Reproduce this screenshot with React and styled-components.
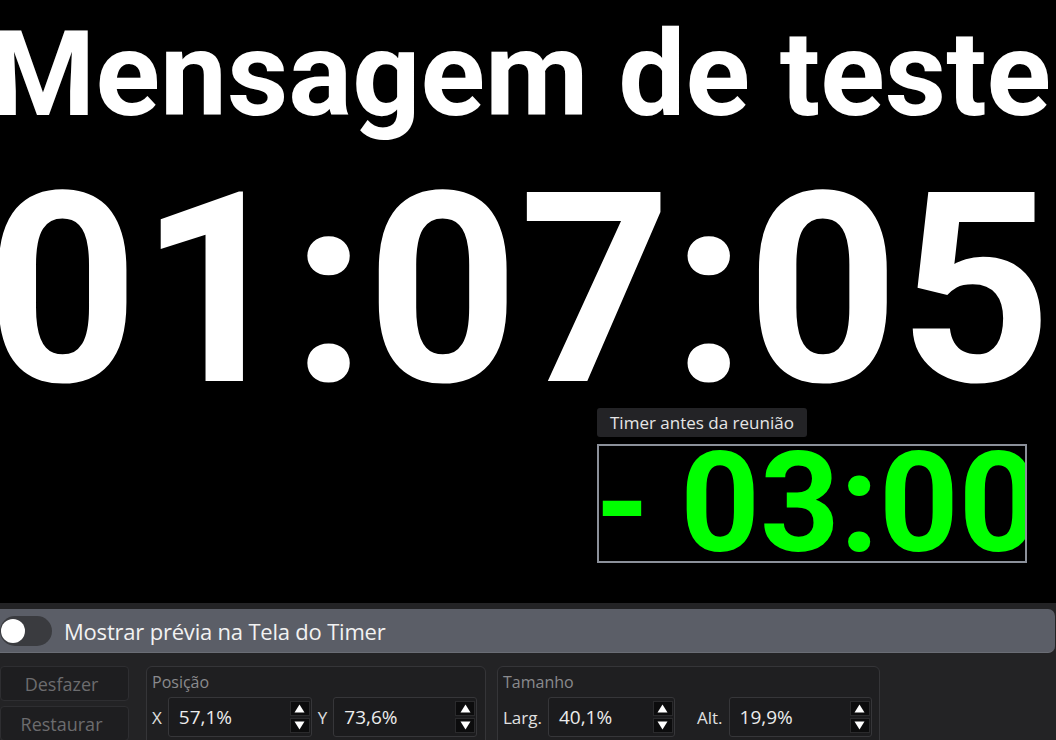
import React from "react";
import styled, { createGlobalStyle } from "styled-components";

const GlobalStyle = createGlobalStyle`
  html, body { margin: 0; padding: 0; background: #000; overflow: hidden; }
  body { font-family: "Open Sans", "Noto Sans", "Liberation Sans", sans-serif; }
  * { box-sizing: border-box; }
`;

const Page = styled.div`
  width: 1056px;
  height: 740px;
  display: flex;
  flex-direction: column;
  overflow: hidden;
`;

const Preview = styled.div`
  position: relative;
  height: 603px;
  flex: none;
  background: #000;
  overflow: hidden;
  display: flex;
  flex-direction: column;
  align-items: center;
  font-family: Roboto, "Liberation Sans", sans-serif;
  font-weight: 700;
  color: #fff;
`;

const Message = styled.div`
  margin-top: 15px;
  font-size: 119.5px;
  line-height: 1;
  white-space: nowrap;
  margin-left: -14px;
`;

const BigTimer = styled.div`
  margin-top: 22px;
  font-size: 266px;
  line-height: 1;
  white-space: nowrap;
  margin-left: -18px;
`;

const Widget = styled.div`
  position: absolute;
  display: flex;
  flex-direction: column;
  align-items: flex-start;
  gap: 7px;
`;

const WidgetLabel = styled.div`
  height: 29px;
  padding: 0 13px;
  display: flex;
  align-items: center;
  background: #232326;
  border-radius: 3px;
  font-family: "Open Sans", "Noto Sans", sans-serif;
  font-weight: 400;
  font-size: 17px;
  color: #e6e6e6;
`;

const WidgetBox = styled.div`
  width: 430px;
  height: 119px;
  border: 2px solid #8b909a;
  display: flex;
  align-items: center;
  overflow: hidden;
`;

const GreenTime = styled.div`
  font-family: Roboto, "Liberation Sans", sans-serif;
  font-weight: 700;
  font-size: 139px;
  line-height: 0.8;
  padding-top: 1px;
  color: #00ff00;
  white-space: nowrap;
  margin-left: -4px;
  word-spacing: -4px;
`;

const Panel = styled.div`
  flex: 1;
  background: #232325;
  padding-top: 6px;
  display: flex;
  flex-direction: column;
  gap: 13px;
`;

const ToggleBar = styled.div`
  width: 1055px;
  height: 44px;
  background: #5b5e67;
  border-radius: 0 7px 7px 0;
  border-bottom: 1px solid #6a6d75;
  display: flex;
  align-items: center;
  gap: 12px;
`;

const Switch = styled.div`
  width: 52px;
  height: 30px;
  border-radius: 15px;
  background: #3a3b3f;
  display: flex;
  align-items: center;
  padding-left: 1px;
`;

const Knob = styled.div`
  width: 24px;
  height: 24px;
  border-radius: 50%;
  background: #fff;
`;

const ToggleText = styled.span`
  font-size: 22px;
  color: #f2f2f2;
  letter-spacing: -0.2px;
`;

const Controls = styled.div`
  display: flex;
  align-items: flex-start;
  gap: 17px;
`;

const ButtonColumn = styled.div`
  display: flex;
  flex-direction: column;
  gap: 5px;
  width: 129px;
`;

const GhostButton = styled.button`
  height: 35px;
  width: 129px;
  background: #1e1e20;
  border: 1px solid #2e2e31;
  border-radius: 4px;
  color: #6c6c6e;
  font-family: inherit;
  font-size: 18px;
  padding: 0 6px 0 0;
`;

const Group = styled.div`
  width: ${(p) => p.$w}px;
  height: 90px;
  border: 1px solid #353538;
  border-radius: 6px;
  background: #1f1f21;
  padding: 3px 5px 0 5px;
  display: flex;
  flex-direction: column;
  gap: 3px;
`;

const GroupTitle = styled.div`
  font-size: 16px;
  color: #8a8a8d;
  height: 24px;
  line-height: 24px;
`;

const FieldRow = styled.div`
  display: flex;
  align-items: center;
  gap: 6px;
`;

const FieldLabel = styled.span`
  font-size: 17px;
  color: #e0e0e0;
  margin-left: ${(p) => p.$ml || 0}px;
`;

const Spin = styled.div`
  width: ${(p) => p.$w}px;
  height: 40px;
  background: #1b1b1d;
  border: 1px solid #363639;
  border-radius: 3px;
  display: flex;
  align-items: center;
  justify-content: space-between;
  padding: 0 1px 0 10px;
`;

const SpinValue = styled.span`
  font-size: 19px;
  color: #ececec;
`;

const Arrows = styled.div`
  display: flex;
  flex-direction: column;
  gap: 2px;
  align-self: flex-start;
  margin-top: 3px;
`;

const ArrowBtn = styled.div`
  width: 20px;
  height: 15px;
  background: #0c0c0d;
  border: 1px solid #2a2a2c;
  display: flex;
  align-items: center;
  justify-content: center;
`;

const Tri = ({ up }) => (
  <svg width="11" height="9" viewBox="0 0 11 9">
    {up ? (
      <polygon points="5.5,0.5 10.5,8.5 0.5,8.5" fill="#fff" />
    ) : (
      <polygon points="0.5,0.5 10.5,0.5 5.5,8.5" fill="#fff" />
    )}
  </svg>
);

const SpinBox = ({ value, w }) => (
  <Spin $w={w}>
    <SpinValue>{value}</SpinValue>
    <Arrows>
      <ArrowBtn>
        <Tri up />
      </ArrowBtn>
      <ArrowBtn>
        <Tri />
      </ArrowBtn>
    </Arrows>
  </Spin>
);

export default function App() {
  return (
    <>
      <GlobalStyle />
      <Page>
        <Preview>
          <Message>Mensagem de teste</Message>
          <BigTimer>01:07:05</BigTimer>
          <Widget style={{ left: 597, top: 408 }}>
            <WidgetLabel>Timer antes da reunião</WidgetLabel>
            <WidgetBox>
              <GreenTime>- 03:00</GreenTime>
            </WidgetBox>
          </Widget>
        </Preview>
        <Panel>
          <ToggleBar>
            <Switch>
              <Knob />
            </Switch>
            <ToggleText>Mostrar prévia na Tela do Timer</ToggleText>
          </ToggleBar>
          <Controls>
            <ButtonColumn>
              <GhostButton>Desfazer</GhostButton>
              <GhostButton>Restaurar</GhostButton>
            </ButtonColumn>
            <Group $w={340}>
              <GroupTitle>Posição</GroupTitle>
              <FieldRow>
                <FieldLabel>X</FieldLabel>
                <SpinBox value="57,1%" w={144} />
                <FieldLabel>Y</FieldLabel>
                <SpinBox value="73,6%" w={144} />
              </FieldRow>
            </Group>
            <Group $w={383} style={{ marginLeft: -6 }}>
              <GroupTitle>Tamanho</GroupTitle>
              <FieldRow>
                <FieldLabel>Larg.</FieldLabel>
                <SpinBox value="40,1%" w={127} />
                <FieldLabel $ml={16}>Alt.</FieldLabel>
                <SpinBox value="19,9%" w={143} />
              </FieldRow>
            </Group>
          </Controls>
        </Panel>
      </Page>
    </>
  );
}
